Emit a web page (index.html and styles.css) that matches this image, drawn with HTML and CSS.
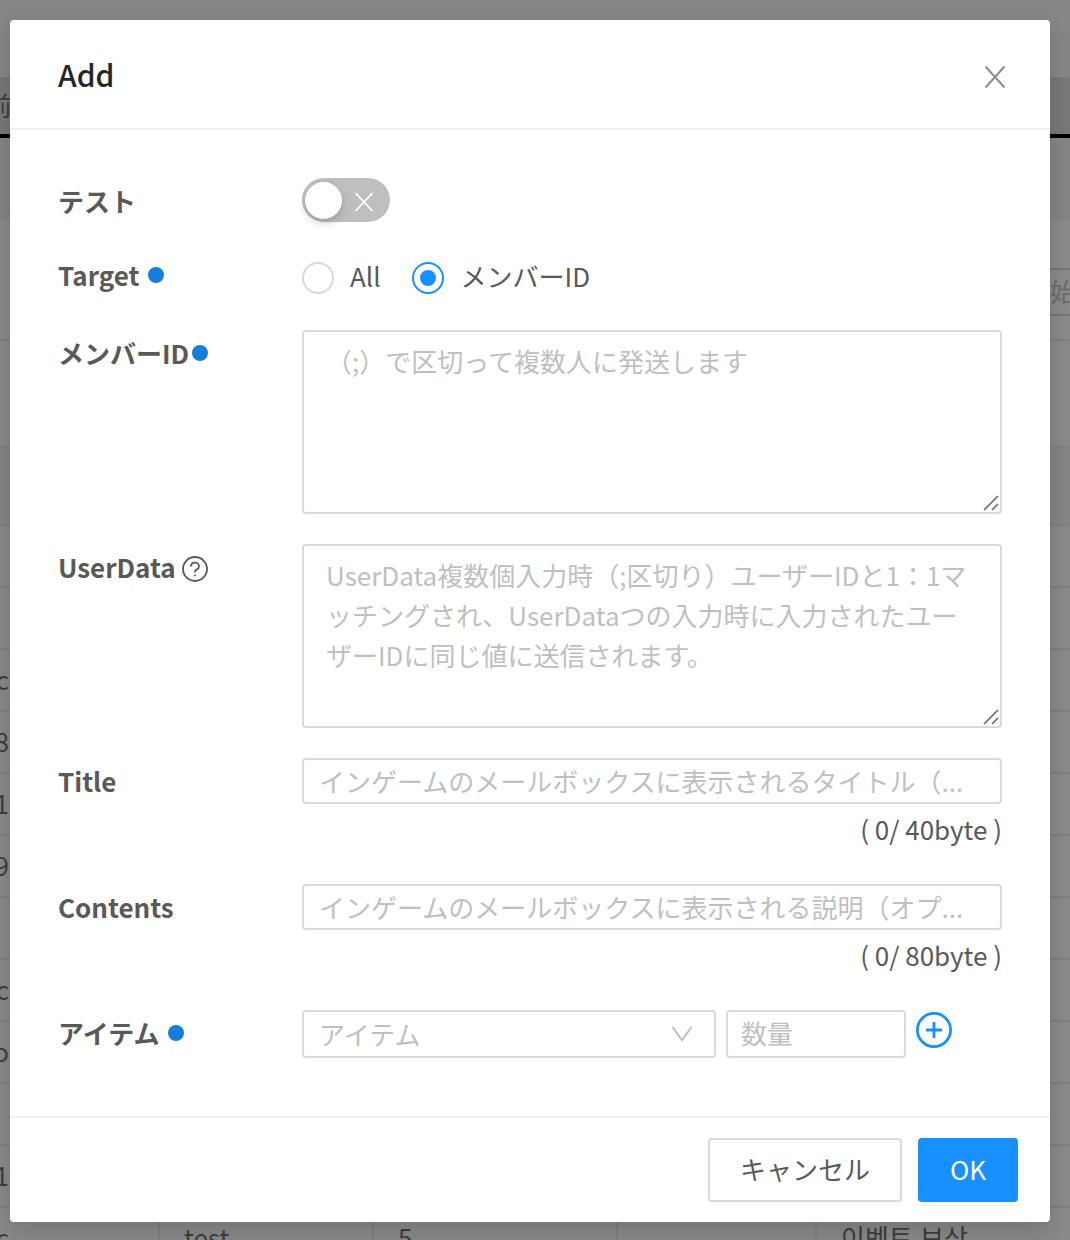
FILE: index.html
```html
<!DOCTYPE html>
<html lang="ja">
<head>
<meta charset="utf-8">
<title>Add</title>
<link rel="stylesheet" href="styles.css">
</head>
<body>
<div class="page">
  <div class="bar"></div>
  <div class="thead"><span>前</span></div>
  <div class="tools"></div>
  <div class="filter"><div class="date">始</div></div>
  <div class="gap"></div>
  <div class="row tall"></div>
  <div class="row"></div>
  <div class="row"></div>
  <div class="row"><span class="id">c</span></div>
  <div class="row"><span class="id">8</span></div>
  <div class="row"><span class="id">1</span></div>
  <div class="row"><span class="id">9</span></div>
  <div class="row"></div>
  <div class="row"><span class="id">c</span></div>
  <div class="row"><span class="id">o</span></div>
  <div class="row"></div>
  <div class="row"><span class="id">1</span></div>
  <div class="row cells"><span class="id">c</span><span>test</span><span>5</span><span></span><span lang="ko">이벤트 보상</span></div>
</div>

<div class="modal">
  <header class="head">
    <h1>Add</h1>
    <svg class="close" width="24" height="24" viewBox="0 0 24 24"><path d="M2.5 1.5l19 21M21.5 1.5l-19 21"/></svg>
  </header>
  <main class="form">
    <div class="item switch-item">
      <label>テスト</label>
      <div class="switch"><i></i><svg width="20" height="20" viewBox="0 0 20 20"><path d="M1.5 1l17 18M18.5 1l-17 18"/></svg></div>
    </div>
    <div class="item target-item">
      <label>Target<b class="dot spaced"></b></label>
      <div class="radios"><i class="radio"></i><span>All</span><i class="radio on"></i><span>メンバーID</span></div>
    </div>
    <div class="item area-item">
      <label>メンバーID<b class="dot"></b></label>
      <div class="area">（;）で区切って複数人に発送します<svg class="grip" width="16" height="16" viewBox="0 0 16 16"><path d="M1 15L15 1M9 15l6-6"/></svg></div>
    </div>
    <div class="item area-item">
      <label>UserData<svg class="help" width="26" height="26" viewBox="0 0 26 26"><circle cx="13" cy="13" r="12"/><path d="M9 10.4c0-2.2 1.7-3.8 4-3.8s4 1.6 4 3.7c0 1.6-1 2.7-2.4 3.3-1 .5-1.6 1-1.6 2.1v.8"/><path d="M13 18.6v1.7"/></svg></label>
      <div class="area">UserData複数個入力時（;区切り）ユーザーIDと1：1マ<br>ッチングされ、UserDataつの入力時に入力されたユー<br>ザーIDに同じ値に送信されます。<svg class="grip" width="16" height="16" viewBox="0 0 16 16"><path d="M1 15L15 1M9 15l6-6"/></svg></div>
    </div>
    <div class="item text-item">
      <label>Title</label>
      <div class="field"><div class="input">インゲームのメールボックスに表示されるタイトル（...</div><div class="count">( 0/ 40byte )</div></div>
    </div>
    <div class="item text-item">
      <label>Contents</label>
      <div class="field"><div class="input">インゲームのメールボックスに表示される説明（オプ...</div><div class="count">( 0/ 80byte )</div></div>
    </div>
    <div class="item pick-item">
      <label>アイテム<b class="dot spaced"></b></label>
      <div class="pick">
        <div class="input select">アイテム<svg width="22" height="16" viewBox="0 0 22 16"><path d="M1.5 1L11 14 20.5 1"/></svg></div>
        <div class="input qty">数量</div>
        <svg class="plus" width="36" height="36" viewBox="0 0 36 36"><circle cx="18" cy="18" r="16.6"/><path d="M18 10v16M10 18h16"/></svg>
      </div>
    </div>
  </main>
  <footer class="foot"><button class="btn">キャンセル</button><button class="btn primary">OK</button></footer>
</div>
</body>
</html>
```
FILE: styles.css
```css
* { box-sizing: border-box; }
body {
  margin: 0;
  width: 1070px;
  height: 1240px;
  overflow: hidden;
  position: relative;
  background: #8a8a8a;
  color: #595959;
  font-family: "Noto Sans CJK JP", sans-serif;
  font-size: 26px;
  line-height: 40px;
}

/* dimmed page behind the dialog */
.page { height: 1240px; overflow: hidden; color: #3e3e3e; }
.bar { height: 77px; background: #868789; }
.thead { height: 61px; background: #797979; border-bottom: 4px solid #000; padding-top: 8px; }
.thead span { margin-left: -14px; }
.tools { height: 82px; background: #848688; }
.filter { height: 121px; padding-top: 48px; border-bottom: 2px solid #828282; background: #8b8b8b; }
.date { height: 48px; margin-left: 1020px; padding-left: 28px; border: 2px solid #767676; border-right: 0; color: #6c6c6c; line-height: 42px; }
.gap { height: 107px; border-bottom: 2px solid #828282; }
.row { height: 62px; border-bottom: 2px solid #818181; line-height: 58px; white-space: nowrap; overflow: hidden; }
.tall { height: 78px; background: #868686; }
.id { display: block; width: 9px; direction: rtl; }
.cells { display: grid; grid-template-columns: 158px 214px 244px 199px 1fr; }
.cells span + span { border-left: 2px solid #818181; padding-left: 24px; }

.modal {
  position: absolute;
  left: 10px;
  top: 20px;
  width: 1040px;
  height: 1202px;
  display: flex;
  flex-direction: column;
  background: #fff;
  border-radius: 4px;
  box-shadow: 0 8px 24px rgba(0, 0, 0, .18);
}
svg { fill: none; flex: none; }
.head {
  height: 110px;
  display: flex;
  align-items: center;
  justify-content: space-between;
  padding: 4px 43px 0 48px;
  border-bottom: 2px solid #efefef;
}
h1 { margin: 0 0 5px; font-size: 30px; font-weight: 500; color: #262626; line-height: 44px; }
.close { stroke: #8c8c8c; stroke-width: 2; margin-top: 2px; }

.form { flex: 1; padding: 48px 48px 0; }
.item { display: grid; grid-template-columns: 244px 700px; align-items: start; }
.item label { display: flex; align-items: center; height: 46px; font-weight: 700; }
.switch-item { height: 74px; }
.target-item { height: 78px; }
.area-item { height: 214px; }
.text-item { height: 126px; }
.dot { width: 16px; height: 16px; border-radius: 50%; background: #177ddc; margin: 0 0 0 3px; }
.dot.spaced { margin-left: 9px; }
.help { margin: 4px 0 0 6px; stroke: #595959; stroke-width: 1.8; }

.switch { width: 88px; height: 44px; border-radius: 22px; background: #bfbfbf; display: flex; align-items: center; padding: 0 16px 0 3px; justify-content: space-between; }
.switch i { width: 37px; height: 37px; border-radius: 50%; background: #fff; box-shadow: 0 4px 8px rgba(0, 35, 11, .2); }
.switch svg { stroke: #fff; stroke-width: 1.8; margin-top: 4px; }

.radios { display: flex; align-items: center; height: 48px; }
.radios span { margin: 0 31px 1px 16px; }
.radios .on + span { margin-left: 17px; }
.radio { width: 32px; height: 32px; margin-top: 4px; border: 2px solid #d9d9d9; border-radius: 50%; display: grid; place-items: center; }
.radio.on { border-color: #1890ff; }
.radio.on::after { content: ""; width: 16px; height: 16px; border-radius: 50%; background: #1890ff; }

.area, .input { border: 2px solid #d9d9d9; border-radius: 4px; color: #bfbfbf; white-space: nowrap; background: #fff; }
.area { position: relative; height: 184px; padding: 9px 22px; }
.grip { position: absolute; right: 1px; bottom: 1px; stroke: #666; stroke-width: 1.6; }
.input { height: 46px; padding-left: 15px; line-height: 42px; }
.count { height: 40px; margin-top: 5px; text-align: right; }

.pick { display: flex; }
.pick .input { height: 48px; line-height: 42px; }
.pick .select { width: 414px; margin-right: 10px; padding-right: 21px; display: flex; justify-content: space-between; align-items: center; }
.select svg { stroke: #bfbfbf; stroke-width: 2; }
.pick .qty { width: 180px; margin-right: 10px; padding-left: 13px; }
.plus { margin-top: 2px; stroke: #1890ff; stroke-width: 2.8; }

.foot { height: 106px; display: flex; justify-content: flex-end; gap: 16px; padding: 20px 32px; border-top: 2px solid #efefef; }
.btn { width: 194px; height: 64px; padding: 0 0 2px; border: 2px solid #d9d9d9; border-radius: 4px; background: #fff; color: #595959; font: inherit; box-shadow: 0 4px 0 rgba(0, 0, 0, .015); }
.btn.primary { width: 100px; border-color: #1890ff; background: #1890ff; color: #fff; box-shadow: 0 4px 0 rgba(0, 0, 0, .045); }
```
